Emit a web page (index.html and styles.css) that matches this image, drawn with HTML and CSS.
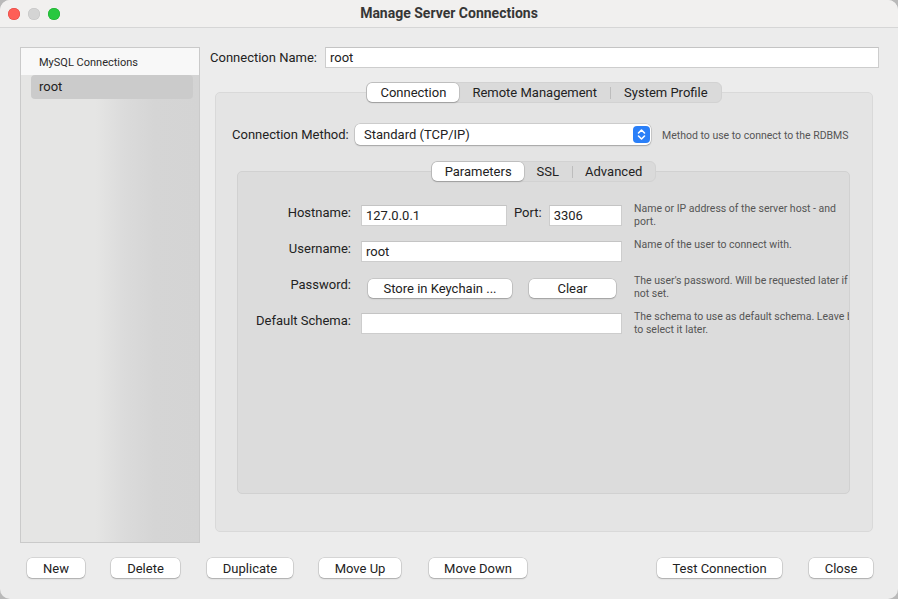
FILE: index.html
```html
<!DOCTYPE html>
<html lang="en">
<head>
<meta charset="utf-8">
<title>Manage Server Connections</title>
<link rel="stylesheet" href="styles.css">
</head>
<body>
<div class="window">
  <header class="titlebar">
    <div class="lights">
      <span class="light red"></span>
      <span class="light gray"></span>
      <span class="light green"></span>
    </div>
    <div class="title">Manage Server Connections</div>
    <div></div>
  </header>
  <div class="content">
    <div class="main">
      <aside class="sidebar">
        <div class="sidebar-head">MySQL Connections</div>
        <div class="sidebar-body">
          <div class="conn-item selected">root</div>
        </div>
      </aside>
      <section class="editor">
        <div class="name-row">
          <span class="label">Connection Name:</span>
          <div class="field grow">root</div>
        </div>
        <div class="tabview outer">
          <div class="segmented">
            <span class="seg active">Connection</span>
            <span class="seg">Remote Management</span>
            <span class="sep"></span>
            <span class="seg">System Profile</span>
          </div>
          <div class="tabpanel outer-panel">
            <div class="method-row">
              <span class="label">Connection Method:</span>
              <div class="select">
                <span>Standard (TCP/IP)</span>
                <span class="stepper">
                  <svg width="17" height="17" viewBox="0 0 17 17"><path d="M5.5 7 L8.5 4 L11.5 7" fill="none" stroke="#fff" stroke-width="1.6" stroke-linecap="round" stroke-linejoin="round"/><path d="M5.5 10 L8.5 13 L11.5 10" fill="none" stroke="#fff" stroke-width="1.6" stroke-linecap="round" stroke-linejoin="round"/></svg>
                </span>
              </div>
              <span class="hint">Method to use to connect to the RDBMS</span>
            </div>
            <div class="tabview inner">
              <div class="segmented">
                <span class="seg active">Parameters</span>
                <span class="seg">SSL</span>
                <span class="sep"></span>
                <span class="seg">Advanced</span>
              </div>
              <div class="tabpanel inner-panel">
                <div class="form">
                  <span class="flabel">Hostname:</span>
                  <div class="fcell host-cell">
                    <div class="field host">127.0.0.1</div>
                    <span class="port-label">Port:</span>
                    <div class="field grow">3306</div>
                  </div>
                  <span class="hint fhint">Name or IP address of the server host - and<br>port.</span>

                  <span class="flabel">Username:</span>
                  <div class="fcell"><div class="field grow">root</div></div>
                  <span class="hint fhint">Name of the user to connect with.</span>

                  <span class="flabel pw">Password:</span>
                  <div class="fcell pw-cell">
                    <button class="btn keychain">Store in Keychain ...</button>
                    <button class="btn clear">Clear</button>
                  </div>
                  <span class="hint fhint">The user's password. Will be requested later if it's<br>not set.</span>

                  <span class="flabel">Default Schema:</span>
                  <div class="fcell"><div class="field grow"></div></div>
                  <span class="hint fhint">The schema to use as default schema. Leave blank<br>to select it later.</span>
                </div>
              </div>
            </div>
          </div>
        </div>
      </section>
    </div>
    <footer class="buttons">
      <button class="btn b-new">New</button>
      <button class="btn b-delete">Delete</button>
      <button class="btn b-dup">Duplicate</button>
      <button class="btn b-up">Move Up</button>
      <button class="btn b-down">Move Down</button>
      <span class="spacer"></span>
      <button class="btn b-test">Test Connection</button>
      <button class="btn b-close">Close</button>
    </footer>
  </div>
</div>
</body>
</html>
```
FILE: styles.css
```css
* { box-sizing: border-box; }
html, body { margin: 0; padding: 0; background: #b9b9b9; }
body { font-family: Roboto, "Liberation Sans", Arial, sans-serif; font-size: 13px; color: #222; }

.window {
  width: 898px; height: 599px;
  background: #ececec;
  border-radius: 10px;
  overflow: hidden;
  display: flex; flex-direction: column;
}

.titlebar {
  height: 28px;
  flex: none;
  background: #f1f0ef;
  border-bottom: 1px solid #d6d6d6;
  display: grid;
  grid-template-columns: 1fr auto 1fr;
  align-items: center;
}
.lights { display: flex; gap: 8px; padding-left: 8px; }
.light { width: 12px; height: 12px; border-radius: 50%; display: block; }
.light.red { background: #fe5f57; box-shadow: inset 0 0 0 0.5px #e0443e; }
.light.gray { background: #d4d4d4; box-shadow: inset 0 0 0 0.5px #c2c2c2; }
.light.green { background: #28c840; box-shadow: inset 0 0 0 0.5px #1aab29; }
.title { font-weight: bold; font-size: 14px; color: #363636; margin-top: -1px; }

.content { flex: 1; display: flex; flex-direction: column; padding: 19px 25px 0 20px; }
.main { display: flex; gap: 10px; height: 496px; }

.sidebar {
  width: 180px; flex: none;
  border: 1px solid #cacaca;
  display: flex; flex-direction: column;
}
.sidebar-head {
  height: 27px; flex: none;
  background: #f8f8f8;
  font-size: 11px; color: #2a2a2a;
  padding-left: 18px;
  padding-top: 1px;
  display: flex; align-items: center;
}
.sidebar-body {
  flex: 1;
  background: linear-gradient(to right, #e5e5e4 0%, #e5e5e4 42%, #dbdbdb 58%, #d5d5d5 75%, #d4d4d4 100%);
  padding: 0 6px 0 10px;
}
.conn-item { height: 24px; padding-left: 8px; padding-bottom: 2px; display: flex; align-items: center; font-size: 13px; color: #222; border-radius: 4px; }
.conn-item.selected { background: #cbcbcb; }

.editor { width: 669px; display: flex; flex-direction: column; }
.name-row { display: flex; align-items: center; gap: 8px; }
.label { white-space: nowrap; }

.field {
  height: 21px;
  background: #fff;
  border: 1px solid #cdcdcd;
  border-top-color: #c4c4c4;
  padding-left: 4px;
  display: flex; align-items: center;
  font-size: 13px; color: #222;
}
.grow { flex: 1; }

.tabview { display: flex; flex-direction: column; align-items: center; }
.tabview.outer { margin: 14px 6px 0 5px; }
.segmented {
  position: relative; z-index: 1;
  height: 21px;
  display: flex; align-items: center;
  background: #dadada;
  border: 1px solid #d2d2d2;
  border-radius: 6px;
}
.seg { height: 100%; display: flex; align-items: center; padding: 0 13px; color: #222; white-space: nowrap; }
.seg.active { background: #fff; border-radius: 5px; box-shadow: 0 0 0 0.5px rgba(0,0,0,0.18), 0 1px 1.5px rgba(0,0,0,0.18); }
.sep { width: 1px; height: 12px; background: #bdbdbd; }
.inner .seg { padding: 0 12.5px; }

.tabpanel { align-self: stretch; margin-top: -11px; border-radius: 5px; }
.outer-panel { height: 440px; background: #e4e4e4; border: 1px solid #d9d9d9; padding: 31px 22px 0 16px; }

.method-row { display: flex; align-items: center; }
.method-row .label { width: 123px; }
.select {
  width: 296px; height: 21px;
  background: #fff;
  border-radius: 5px;
  box-shadow: 0 0 0 0.5px rgba(0,0,0,0.2), 0 1px 1.5px rgba(0,0,0,0.2);
  display: flex; align-items: center; justify-content: space-between;
  padding: 0 1px 0 9px;
}
.stepper { width: 17px; height: 17px; border-radius: 4px; background: #2a7ff8; display: block; }
.stepper svg { display: block; }
.hint { font-size: 10.5px; color: #555; line-height: 13px; white-space: nowrap; }
.method-row .hint { margin-left: 11px; margin-top: 1px; }

.tabview.inner { margin: 16px 0 0 5px; }
.inner-panel { height: 323px; background: #dcdcdc; border: 1px solid #d1d1d1; padding-top: 33px; overflow: hidden; }

.form {
  display: grid;
  grid-template-columns: 113px 261px 1fr;
  column-gap: 10px;
  row-gap: 15px;
  grid-auto-rows: 21px;
}
.form > :nth-child(9), .form > :nth-child(8), .form > :nth-child(7) { height: 22px; }
.flabel { text-align: right; line-height: 15px; white-space: nowrap; }
.flabel.pw { padding-top: 0; }
.fcell { display: flex; align-items: center; }
.fhint { margin-left: 2px; margin-top: -3px; }
.host { width: 146px; flex: none; }
.port-label { padding: 0 7px; align-self: flex-start; line-height: 15px; }
.pw-cell { padding-left: 7px; gap: 17px; }

.btn {
  font-family: inherit; font-size: 13px; color: #222;
  height: 20px;
  background: #fff;
  border: none;
  border-radius: 5px;
  box-shadow: 0 0 0 0.5px rgba(0,0,0,0.18), 0 1px 1.5px rgba(0,0,0,0.2);
  padding: 0;
  display: flex; align-items: center; justify-content: center;
}
.keychain { width: 144px; height: 19px; }
.clear { width: 87px; height: 19px; }

.buttons { display: flex; align-items: center; margin-top: 15px; padding-left: 7px; }
.buttons .spacer { flex: 1; }
.b-new { width: 58px; }
.b-delete { width: 69px; margin-left: 26px; }
.b-dup { width: 86px; margin-left: 27px; }
.b-up { width: 82px; margin-left: 26px; }
.b-down { width: 98px; margin-left: 28px; }
.b-test { width: 125px; }
.b-close { width: 64px; margin-left: 27px; }
```
